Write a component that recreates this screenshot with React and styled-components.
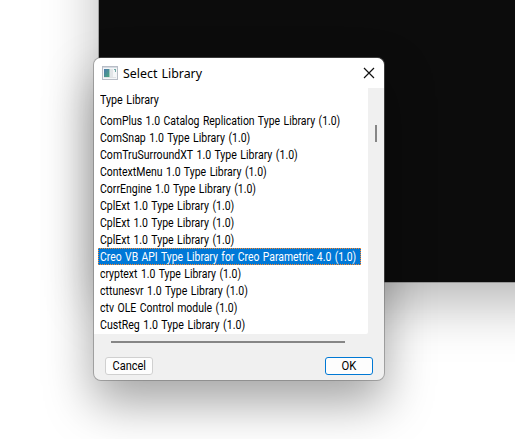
import React, { useLayoutEffect, useRef, useState } from 'react';
import styled, { createGlobalStyle } from 'styled-components';

const Global = createGlobalStyle`
  * { box-sizing: border-box; }
  body { margin: 0; background: #fff; overflow: hidden; }
`;

const Desktop = styled.div`
  position: relative;
  width: 515px;
  height: 439px;
  overflow: hidden;
  background: #fff;
  color: #000;
  font: 12px/17px Roboto, 'Liberation Sans', sans-serif;
`;

const ConsoleWindow = styled.div`
  position: absolute;
  left: 98px;
  top: -120px;
  width: 620px;
  height: 403px;
  background: #0c0c0c;
  background-clip: padding-box;
  border: 1px solid rgba(120, 120, 120, 0.6);
  box-shadow: 0 22px 50px rgba(0, 0, 0, 0.28);
`;

const Dialog = styled.section`
  position: absolute;
  left: 93px;
  top: 57px;
  width: 292px;
  height: 324px;
  display: flex;
  flex-direction: column;
  overflow: hidden;
  background: #f0f0f0;
  background-clip: padding-box;
  border: 1px solid rgba(110, 110, 110, 0.5);
  border-radius: 8px;
  box-shadow: 0 22px 48px rgba(0, 0, 0, 0.36);
`;

const TitleBar = styled.header`
  flex: 0 0 30px;
  display: flex;
  align-items: center;
  padding: 0 9px 0 8px;
  background: #fff;
`;

const Title = styled.h1`
  flex: 1;
  margin: 0 0 0 5px;
  font: 13px/18px 'Noto Sans', sans-serif;
`;

const CloseButton = styled.button`
  display: flex;
  margin-top: -1px;
  padding: 0;
  border: 0;
  background: none;
  color: #111;
`;

const Body = styled.div`
  flex: 0 0 246px;
  display: flex;
`;

const ListPane = styled.div`
  width: 274px;
  background: #fff;
  border-bottom-right-radius: 2px;
`;

const ListHeader = styled.div`
  height: 24px;
  padding: 4px 0 0 6px;
`;

const List = styled.ul`
  margin: 0;
  padding: 0 0 0 4px;
  list-style: none;
`;

const Row = styled.li`
  width: 263px;
  height: 17px;
  padding: 0 0 0 2px;
  line-height: 18px;
  white-space: nowrap;
  color: ${(p) => (p.$selected ? '#fff' : '#000')};
  background: ${(p) => (p.$selected ? '#0078d7' : 'transparent')};
  outline: ${(p) => (p.$selected ? '1px dotted #ff8728' : 'none')};
  outline-offset: -1px;
`;

const VerticalTrack = styled.div`
  flex: 1;
  display: flex;
  justify-content: center;
  padding-top: 37px;
`;

const VerticalThumb = styled.div`
  width: 2px;
  height: 17px;
  background: #868686;
`;

const HorizontalTrack = styled.div`
  flex: 0 0 23px;
  padding: 7px 0 0 17px;
`;

const HorizontalThumb = styled.div`
  width: 234px;
  height: 2px;
  background: #868686;
`;

const Footer = styled.footer`
  display: flex;
  justify-content: space-between;
  padding: 0 11px;
`;

const PushButton = styled.button`
  width: 48px;
  height: 18px;
  padding: 0;
  border: 1px solid ${(p) => (p.$primary ? '#0078d4' : '#d0d0d0')};
  border-radius: 3px;
  background: #fdfdfd;
  color: #000;
  font: inherit;
  line-height: 16px;
`;

const Label = styled.span`
  display: inline-block;
  white-space: nowrap;
  word-spacing: 1px;
  transform-origin: ${(p) => (p.$centered ? 'center' : 'left')};
`;

// Condenses or widens a label so that it spans the given width.
function FittedText({ text, width, centered }) {
  const ref = useRef(null);
  const [scale, setScale] = useState(1);
  useLayoutEffect(() => {
    setScale(width / ref.current.offsetWidth);
  }, [text, width]);
  return (
    <Label ref={ref} $centered={centered} style={{ transform: `scaleX(${scale})` }}>
      {text}
    </Label>
  );
}

const libraries = [
  ['ComPlus 1.0 Catalog Replication Type Library (1.0)', 240],
  ['ComSnap 1.0 Type Library (1.0)', 150],
  ['ComTruSurroundXT 1.0 Type Library (1.0)', 198],
  ['ContextMenu 1.0 Type Library (1.0)', 167],
  ['CorrEngine 1.0 Type Library (1.0)', 156],
  ['CplExt 1.0 Type Library (1.0)', 134],
  ['CplExt 1.0 Type Library (1.0)', 134],
  ['CplExt 1.0 Type Library (1.0)', 134],
  ['Creo VB API Type Library for Creo Parametric 4.0 (1.0)', 256],
  ['cryptext 1.0 Type Library (1.0)', 141],
  ['cttunesvr 1.0 Type Library (1.0)', 148],
  ['ctv OLE Control module (1.0)', 137],
  ['CustReg 1.0 Type Library (1.0)', 145],
];

function AppIcon() {
  return (
    <svg width="16" height="14" viewBox="0 0 16 14">
      <defs>
        <linearGradient id="pane" x1="0" y1="0" x2="1" y2="1">
          <stop offset="0" stopColor="#4b78ad" />
          <stop offset="1" stopColor="#49a77d" />
        </linearGradient>
      </defs>
      <rect x="0.5" y="0.5" width="15" height="13" fill="#f4f6f8" stroke="#b8bdc6" />
      <path d="M1 1.5h14" stroke="#d5dae1" />
      <rect x="2" y="3" width="5.5" height="8" fill="url(#pane)" />
      <rect x="8" y="3" width="3" height="8" fill="#e2e5e8" />
      <path d="M12 3h2v3h-1V4h-1z" fill="#72a9a5" />
      <path d="M2 11.5h12" stroke="#e0e2e5" />
    </svg>
  );
}

export default function App() {
  return (
    <>
      <Global />
      <Desktop>
        <ConsoleWindow />
        <Dialog>
          <TitleBar>
            <AppIcon />
            <Title><FittedText text="Select Library" width={79} /></Title>
            <CloseButton aria-label="Close">
              <svg width="12" height="12" viewBox="0 0 12 12" fill="none" stroke="currentColor" strokeWidth="1.2">
                <path d="M1 1l10 10M11 1L1 11" />
              </svg>
            </CloseButton>
          </TitleBar>
          <Body>
            <ListPane>
              <ListHeader><FittedText text="Type Library" width={59} /></ListHeader>
              <List>
                {libraries.map(([name, width], i) => (
                  <Row key={i} $selected={i === 8}><FittedText text={name} width={width} /></Row>
                ))}
              </List>
            </ListPane>
            <VerticalTrack><VerticalThumb /></VerticalTrack>
          </Body>
          <HorizontalTrack><HorizontalThumb /></HorizontalTrack>
          <Footer>
            <PushButton><FittedText text="Cancel" width={34} centered /></PushButton>
            <PushButton $primary><FittedText text="OK" width={15} centered /></PushButton>
          </Footer>
        </Dialog>
      </Desktop>
    </>
  );
}
